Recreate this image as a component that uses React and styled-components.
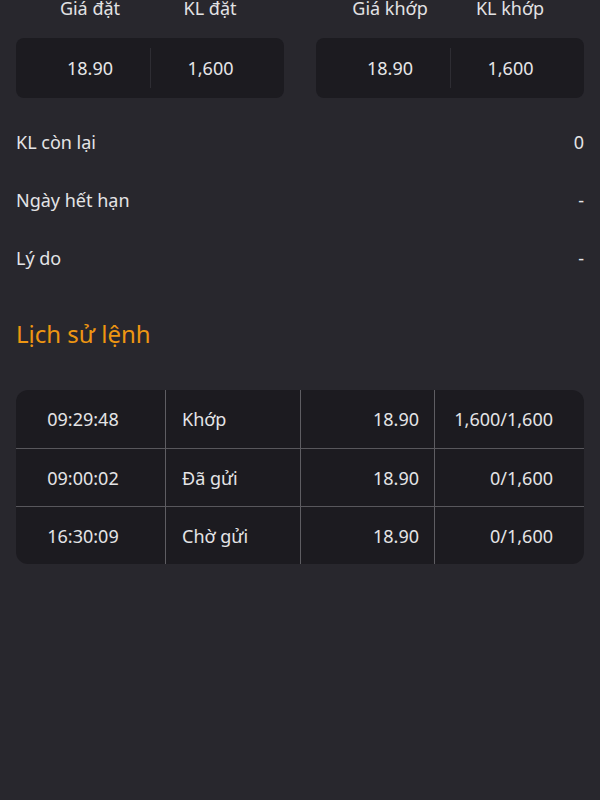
import React from "react";
import styled, { createGlobalStyle } from "styled-components";

const GlobalStyle = createGlobalStyle`
  html, body {
    margin: 0;
    padding: 0;
    background: #28272d;
  }
  body {
    font-family: "Noto Sans", "Open Sans", sans-serif;
    color: #e6e6e8;
    overflow: hidden;
  }
`;

const Page = styled.div`
  width: 600px;
  height: 800px;
  box-sizing: border-box;
  padding: 0 16px;
  background: #28272d;
  overflow: hidden;
`;

const TopGrid = styled.div`
  display: grid;
  grid-template-columns: 1fr 1fr;
  column-gap: 32px;
  margin-top: -4px;
`;

const Pair = styled.div`
  display: flex;
  flex-direction: column;
`;

const PairHead = styled.div`
  display: grid;
  grid-template-columns: 1fr 1fr;
  padding: 0 14px;
  height: 24px;
  line-height: 24px;
  font-size: 18px;
  color: #e2e2e4;
`;

const HeadLabel = styled.div`
  text-align: center;
`;

const ValueCard = styled.div`
  margin-top: 18px;
  height: 60px;
  background: #1c1b20;
  border-radius: 8px;
  padding: 0 14px;
  display: grid;
  grid-template-columns: 1fr 1fr;
  align-items: center;
`;

const ValueCell = styled.div`
  text-align: center;
  font-size: 18px;
  line-height: 40px;
  border-left: ${(p) => (p.$divider ? "1px solid #2e2d33" : "none")};
`;

const InfoList = styled.div`
  margin-top: 15px;
  display: flex;
  flex-direction: column;
`;

const InfoRow = styled.div`
  display: flex;
  justify-content: space-between;
  align-items: center;
  height: 58px;
  font-size: 18px;
  color: #e4e4e6;
`;

const SectionTitle = styled.h2`
  margin: 27px 0 36px;
  height: 40px;
  line-height: 40px;
  font-size: 24px;
  font-weight: 400;
  color: #ee9612;
`;

const Table = styled.div`
  display: grid;
  grid-template-columns: 149px 135px 134px 1fr;
  background: #1c1b20;
  border-radius: 12px;
  overflow: hidden;
`;

const Cell = styled.div`
  height: 58px;
  display: flex;
  align-items: center;
  justify-content: ${(p) => p.$justify};
  padding: ${(p) => p.$pad};
  font-size: 18px;
  color: #e4e4e6;
  box-sizing: border-box;
  border-top: ${(p) => (p.$first ? "none" : "1px solid #58575c")};
  border-left: ${(p) => (p.$col > 0 ? "1px solid #5e5d62" : "none")};
`;

const colStyle = [
  { justify: "center", pad: "0 15px 0 0" },
  { justify: "flex-start", pad: "0 0 0 16px" },
  { justify: "flex-end", pad: "0 15px 0 0" },
  { justify: "flex-end", pad: "0 31px 0 0" },
];

const history = [
  ["09:29:48", "Khớp", "18.90", "1,600/1,600"],
  ["09:00:02", "Đã gửi", "18.90", "0/1,600"],
  ["16:30:09", "Chờ gửi", "18.90", "0/1,600"],
];

const pairs = [
  { labels: ["Giá đặt", "KL đặt"], values: ["18.90", "1,600"] },
  { labels: ["Giá khớp", "KL khớp"], values: ["18.90", "1,600"] },
];

const info = [
  ["KL còn lại", "0"],
  ["Ngày hết hạn", "-"],
  ["Lý do", "-"],
];

export default function App() {
  return (
    <>
      <GlobalStyle />
      <Page>
        <TopGrid>
          {pairs.map((p, i) => (
            <Pair key={i}>
              <PairHead>
                {p.labels.map((l) => (
                  <HeadLabel key={l}>{l}</HeadLabel>
                ))}
              </PairHead>
              <ValueCard>
                <ValueCell>{p.values[0]}</ValueCell>
                <ValueCell $divider>{p.values[1]}</ValueCell>
              </ValueCard>
            </Pair>
          ))}
        </TopGrid>
        <InfoList>
          {info.map(([k, v]) => (
            <InfoRow key={k}>
              <span>{k}</span>
              <span>{v}</span>
            </InfoRow>
          ))}
        </InfoList>
        <SectionTitle>Lịch sử lệnh</SectionTitle>
        <Table>
          {history.map((row, r) =>
            row.map((c, ci) => (
              <Cell
                key={`${r}-${ci}`}
                $first={r === 0}
                $col={ci}
                $justify={colStyle[ci].justify}
                $pad={colStyle[ci].pad}
              >
                {c}
              </Cell>
            ))
          )}
        </Table>
      </Page>
    </>
  );
}
